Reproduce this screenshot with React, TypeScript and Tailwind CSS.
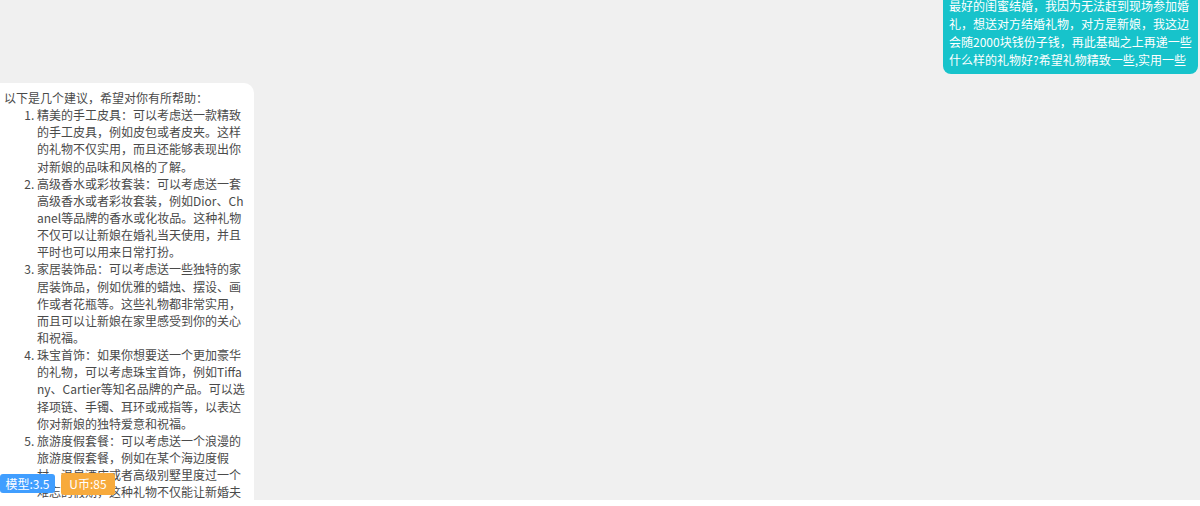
import React from "react";

const USER_TEXT =
  "最好的闺蜜结婚，我因为无法赶到现场参加婚礼，想送对方结婚礼物，对方是新娘，我这边会随2000块钱份子钱，再此基础之上再递一些什么样的礼物好?希望礼物精致一些,实用一些";

const TIPS = [
  "精美的手工皮具：可以考虑送一款精致的手工皮具，例如皮包或者皮夹。这样的礼物不仅实用，而且还能够表现出你对新娘的品味和风格的了解。",
  "高级香水或彩妆套装：可以考虑送一套高级香水或者彩妆套装，例如Dior、Chanel等品牌的香水或化妆品。这种礼物不仅可以让新娘在婚礼当天使用，并且平时也可以用来日常打扮。",
  "家居装饰品：可以考虑送一些独特的家居装饰品，例如优雅的蜡烛、摆设、画作或者花瓶等。这些礼物都非常实用，而且可以让新娘在家里感受到你的关心和祝福。",
  "珠宝首饰：如果你想要送一个更加豪华的礼物，可以考虑珠宝首饰，例如Tiffany、Cartier等知名品牌的产品。可以选择项链、手镯、耳环或戒指等，以表达你对新娘的独特爱意和祝福。",
  "旅游度假套餐：可以考虑送一个浪漫的旅游度假套餐，例如在某个海边度假村、温泉酒店或者高级别墅里度过一个难忘的假期，这种礼物不仅能让新婚夫妇放松身心，还能留下美好的回忆。",
];

export default function App() {
  return (
    <div className="h-[506px] bg-white font-['Noto_Sans_CJK_SC',sans-serif]">
      <div className="relative h-[500px] overflow-hidden bg-[#f0f0f0]">
        <div className="flex flex-col -mt-[3px]">
          {/* user message */}
          <div className="self-end mr-[2px] w-[255px] rounded-b-[8px] bg-[#17c3cb] pl-[6px] pr-[4px] pb-[5px] text-[12px] leading-[18px] text-white break-all">
            {USER_TEXT}
          </div>

          {/* assistant reply */}
          <div className="mt-[9px] w-[254px] rounded-tr-[10px] bg-white pt-[6px] px-[4px] pb-4 text-[12px] leading-[17.14px] text-[#4a4a4a] break-all">
            <p>以下是几个建议，希望对你有所帮助：</p>
            <ol className="list-decimal pl-[33px] pr-[4px]">
              {TIPS.map((t, i) => (
                <li key={i}>{t}</li>
              ))}
            </ol>
          </div>
        </div>

        <div className="absolute left-0 top-[474px] flex h-[19px] w-[55px] items-center justify-center rounded-[3px] bg-[#409eff] text-[12px] text-white">
          模型:3.5
        </div>
        <div className="absolute left-[61px] top-[473px] flex h-[22px] w-[54px] items-center justify-center rounded-[3px] bg-[#f7aa3c] text-[12px] text-white">
          U币:85
        </div>
      </div>
    </div>
  );
}
